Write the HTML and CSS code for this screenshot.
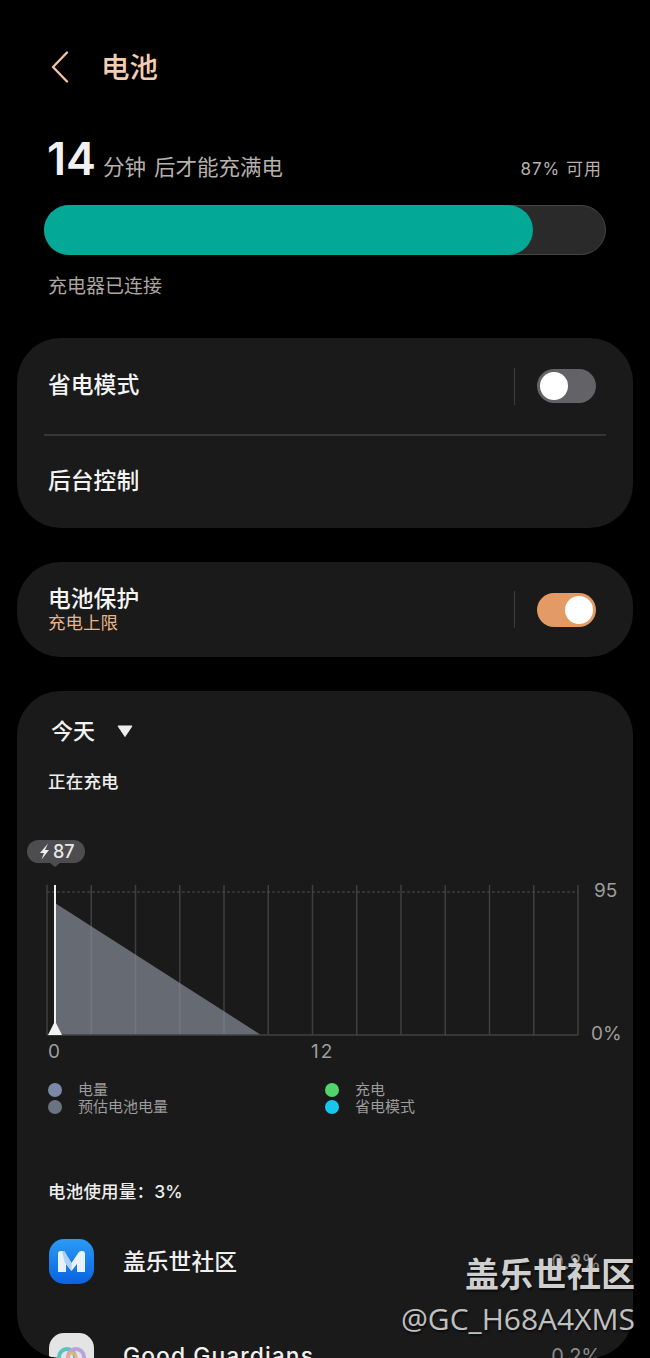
FILE: index.html
```html
<!DOCTYPE html>
<html lang="zh-CN">
<head>
<meta charset="utf-8">
<title>电池</title>
<link rel="stylesheet" href="styles.css">
</head>
<body>
<div class="screen">
  <header class="top">
    <svg class="back" width="18" height="32" viewBox="0 0 18 32"><path d="M16 1.500 2 16l14 14.500" fill="none" stroke="#f2c4a2" stroke-width="2.400" stroke-linecap="round" stroke-linejoin="round"/></svg>
    <h1 class="title">电池</h1>
  </header>

  <section class="status">
    <div class="status-line">
      <span class="mins">14</span>
      <span class="unit">分钟</span>
      <span class="unit">后才能充满电</span>
      <span class="avail">87% 可用</span>
    </div>
    <div class="bar"><div class="bar-fill"></div></div>
    <p class="charger">充电器已连接</p>
  </section>

  <section class="card card-mode">
    <div class="row row-mode">
      <span class="row-title">省电模式</span>
      <span class="vline"></span>
      <span class="toggle"><span class="knob"></span></span>
    </div>
    <div class="divider"></div>
    <div class="row row-bg"><span class="row-title">后台控制</span></div>
  </section>

  <section class="card card-protect">
    <div class="row-text">
      <span class="row-title">电池保护</span>
      <span class="row-sub">充电上限</span>
    </div>
    <span class="vline"></span>
    <span class="toggle on"><span class="knob"></span></span>
  </section>

  <section class="card card-usage">
    <div class="period"><span>今天</span><svg class="caret" width="16" height="12" viewBox="0 0 16 12"><path d="M1 1h14L8 11.500z" fill="#eee" stroke="#eee" stroke-linejoin="round"/></svg></div>
    <p class="sect sect-charge">正在充电</p>
    <svg class="chart" width="616" height="222" viewBox="0 0 616 222">
      <rect x="10" y="0" width="58" height="23" rx="11.500" fill="#4d4d4f"/>
      <path d="M33 23h10l-5 4z" fill="#4d4d4f"/>
      <path d="M31 3.500 23 13h4l-2.500 6.500 7.500-9.500h-4z" fill="#eee"/>
      <text x="36" y="18" class="tip">87</text>
      <g stroke="#3f3f3f" stroke-width="1.500">
        <path d="M30 45v150M74.250 45v150M118.500 45v150M162.750 45v150M207 45v150M251.250 45v150M295.500 45v150M339.750 45v150M384 45v150M428.250 45v150M472.500 45v150M516.750 45v150M561 45v150"/>
      </g>
      <path d="M30 52H561" stroke="#4c4c4c" stroke-width="1.200" stroke-dasharray="3 2"/>
      <path d="M38 63 244 195H38z" fill="#8a929e" fill-opacity=".68"/>
      <path d="M30 195H561" stroke="#404040" stroke-width="1.500"/>
      <path d="M38 45v150" stroke="#f2f2f2" stroke-width="2"/>
      <path d="M31 195 38 181l7 14z" fill="#f2f2f2"/>
      <text x="577" y="57" class="axis">95</text>
      <text x="574" y="200" class="axis">0%</text>
      <text x="31" y="218" class="axis">0</text>
      <text x="294" y="218" class="axis axis-wide">12</text>
    </svg>
    <div class="legend">
      <div class="legend-item"><i class="dot dot-a"></i>电量</div>
      <div class="legend-item"><i class="dot dot-c"></i>充电</div>
      <div class="legend-item"><i class="dot dot-b"></i>预估电池电量</div>
      <div class="legend-item"><i class="dot dot-d"></i>省电模式</div>
    </div>
    <p class="sect sect-use">电池使用量：3%</p>
    <div class="app">
      <svg class="app-icon" width="45" height="45" viewBox="0 0 45 45">
        <defs><linearGradient id="mblue" x1="0" y1="0" x2="0" y2="1"><stop offset="0" stop-color="#2b9bf5"/><stop offset="1" stop-color="#0a62e0"/></linearGradient></defs>
        <rect width="45" height="45" rx="15" fill="url(#mblue)"/>
        <path d="M9 33V14.500Q9 12 11.500 12h1.500q1.500 0 2.500 1.500L22.500 24l7-10.500Q30.500 12 32 12h1.500Q36 12 36 14.500V33h-8V25l-5.500 7-5.500-7v8z" fill="#e9f1fb"/>
        <path d="M13 12h2.500l7 12v8L16 24z" fill="#a9d2f6"/>
      </svg>
      <span class="app-name">盖乐世社区</span>
      <span class="app-pct">0.2%</span>
    </div>
    <div class="app app-2">
      <svg class="app-icon" width="45" height="45" viewBox="0 0 45 45">
        <rect width="45" height="45" rx="15" fill="#e4e4e4"/>
        <circle cx="18" cy="24" r="8" fill="none" stroke="#5cc2c0" stroke-width="4"/>
        <circle cx="27" cy="24" r="8" fill="none" stroke="#b9a3dc" stroke-width="4"/>
        <circle cx="23" cy="24" r="4" fill="none" stroke="#e0b27d" stroke-width="3"/>
      </svg>
      <span class="app-name app-name-latin">Good Guardians</span>
      <span class="app-pct">0.2%</span>
    </div>
  </section>

  <div class="watermark">
    <div class="wm-1">盖乐世社区</div>
    <div class="wm-2">@GC_H68A4XMS</div>
  </div>
</div>
</body>
</html>
```
FILE: styles.css
```css
* { box-sizing: border-box; }
html, body { margin: 0; padding: 0; background: #000; }
body {
  font-family: Inter, "Noto Sans CJK SC", sans-serif;
  color: #f2f2f2;
}
.screen {
  position: relative;
  width: 650px;
  height: 1358px;
  overflow: hidden;
  padding: 0 17px;
}
p, h1 { margin: 0; }

.top {
  display: flex;
  align-items: center;
  height: 30px;
  margin-top: 52px;
  margin-left: 34px;
}
.back { display: block; flex: none; }
.title {
  margin: 1px 0 0 32px;
  font-size: 28.500px;
  line-height: 30px;
  font-weight: 500;
  color: #f4cdb0;
}

.status { margin-top: 58px; }
.status-line {
  display: flex;
  align-items: baseline;
  height: 37px;
  padding: 0 31px 0 30px;
}
.mins {
  font-size: 45px;
  line-height: 37px;
  font-weight: 600;
  color: #f1f1f1;
  width: 56px;
}
.unit {
  font-size: 21.500px;
  line-height: 26px;
  color: #b7b0ac;
  margin-right: 8px;
}
.avail {
  margin-left: auto;
  font-size: 17px;
  line-height: 24px;
  letter-spacing: 1px;
  color: #b7b0ac;
}
.bar {
  margin: 28px 27px 0;
  height: 50px;
  border-radius: 25px;
  background: #2a2a2a;
  border: 1px solid #444;
}
.bar-fill {
  width: 489px;
  height: 50px;
  margin: -1px 0 0 -1px;
  background: #03a896;
  border-radius: 25px;
}
.charger {
  margin: 20px 0 0 31px;
  font-size: 19px;
  line-height: 24px;
  color: #aca5a1;
}

.card {
  background: #1a1a1a;
  border-radius: 44px;
}
.card-mode {
  margin-top: 39px;
  height: 190px;
  padding: 0 27px;
}
.row { display: flex; align-items: center; padding-left: 4px; }
.row-mode { height: 96px; padding-right: 10px; }
.row-bg { height: 91px; }
.row-mode .row-title, .row-bg .row-title { margin-bottom: 2px; }
.row-title {
  font-size: 22.800px;
  line-height: 30px;
  font-weight: 500;
  color: #f4f4f4;
}
.vline {
  width: 1px;
  height: 37px;
  background: #3d3d3d;
  margin-left: auto;
}
.toggle {
  position: relative;
  display: block;
  flex: none;
  width: 59px;
  height: 34px;
  margin-left: 22px;
  border-radius: 17px;
  background: #636367;
}
.knob {
  position: absolute;
  top: 3px;
  left: 3px;
  width: 28px;
  height: 28px;
  border-radius: 50%;
  background: #fff;
}
.toggle.on { background: #e39a65; }
.toggle.on .knob { left: 28px; }
.divider { height: 2px; background: #363636; }

.card-protect {
  display: flex;
  align-items: center;
  margin-top: 34px;
  height: 95px;
  padding: 0 37px 0 31px;
}
.row-text { display: flex; flex-direction: column; margin-bottom: 2px; }
.row-text .row-title { line-height: 27px; }
.row-sub {
  font-size: 17.500px;
  line-height: 21px;
  color: #e8b48c;
}

.card-usage {
  margin-top: 34px;
  height: 667px;
  overflow: hidden;
  padding-top: 23px;
}
.period {
  display: flex;
  align-items: center;
  gap: 22px;
  height: 30px;
  padding-left: 34px;
  font-size: 22px;
  font-weight: 500;
}
.caret { margin-top: 4px; }
.sect {
  margin-left: 31px;
  font-size: 17.500px;
  line-height: 22px;
  letter-spacing: .2px;
  color: #eee;
  font-weight: 500;
}
.sect-charge { margin-top: 27px; }
.chart { display: block; margin-top: 47px; }
.tip { font-size: 18px; fill: #e8e8e8; font-weight: 500; }
.axis { font-size: 19px; fill: #9d9d9d; }
.axis-wide { letter-spacing: 2px; }

.legend {
  display: grid;
  grid-template-columns: 277px 1fr;
  grid-auto-rows: 17px;
  margin: 19px 0 0 31px;
  font-size: 15px;
  line-height: 17px;
  color: #9c9c9c;
}
.legend-item { display: flex; align-items: center; }
.dot {
  width: 14px;
  height: 14px;
  border-radius: 50%;
  margin-right: 16px;
  flex: none;
}
.dot-a { background: #7c88a8; }
.dot-b { background: #6c7380; }
.dot-c { background: #50d46b; }
.dot-d { background: #17c6ea; }

.sect-use { margin-top: 66px; }
.app {
  display: flex;
  align-items: center;
  height: 45px;
  margin: 36px 32px 0 32px;
}
.app-2 { margin-top: 49px; }
.app-icon { display: block; flex: none; }
.app-name {
  margin-left: 29px;
  font-size: 22.800px;
  line-height: 30px;
  font-weight: 500;
  color: #f0f0f0;
}
.app-name-latin { letter-spacing: 1.100px; }
.app-pct {
  margin-left: auto;
  font-size: 20px;
  line-height: 26px;
  color: #8a8a8a;
}

.watermark {
  position: absolute;
  right: 15px;
  top: 1253px;
  text-align: right;
  text-shadow: 1px 2px 2px rgba(0,0,0,.6);
}
.wm-1 {
  font-size: 34px;
  line-height: 44px;
  font-weight: 700;
  color: #cfcfcf;
}
.wm-2 {
  font-family: "Open Sans", sans-serif;
  font-size: 30px;
  line-height: 44px;
  color: #c0c0c0;
}
```
